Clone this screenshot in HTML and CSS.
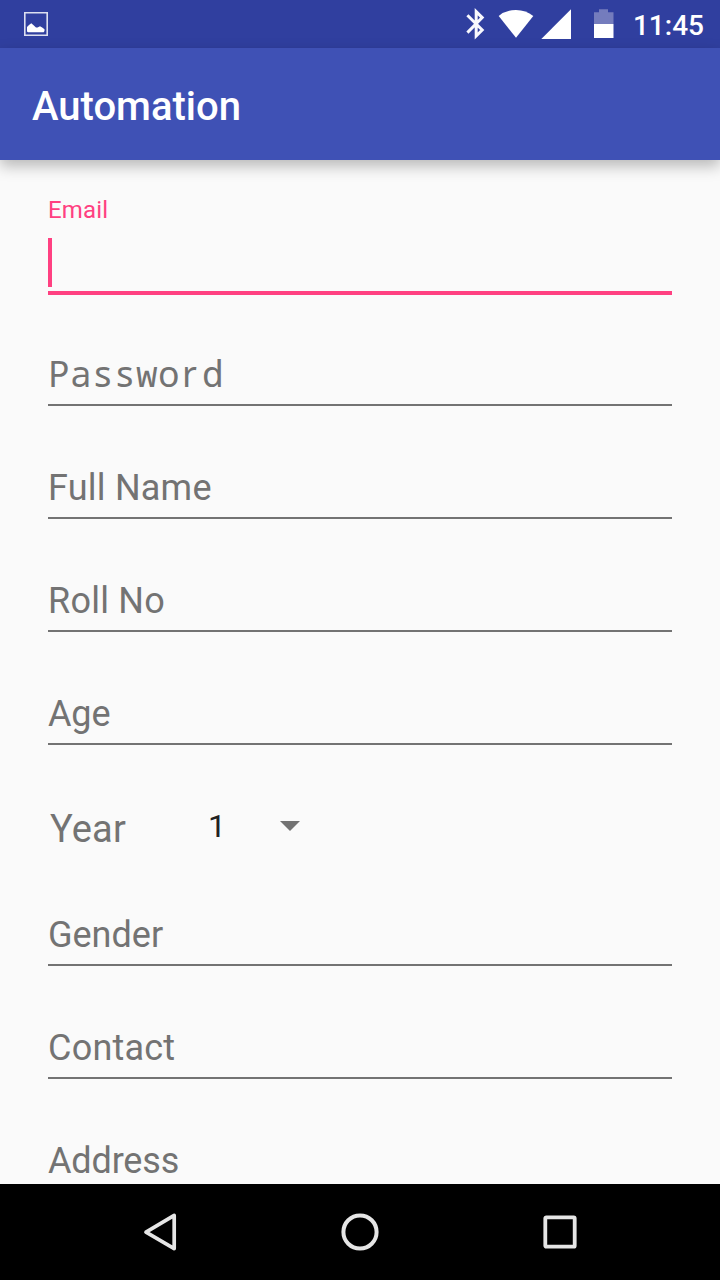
FILE: index.html
```html
<!DOCTYPE html>
<html lang="en">
<head>
<meta charset="utf-8">
<title>Automation</title>
<link rel="stylesheet" href="styles.css">
</head>
<body>
<div class="screen">
  <header class="status-bar">
    <svg class="picture-icon" width="24" height="24" viewBox="0 0 24 24">
      <path d="M.8.8h22.4v22.4H.8z" fill="none" stroke="#dcdff0" stroke-width="1.6"/>
      <path d="M3 19.5V15l2-2 2.3-1.8 2 1.9 2.7 2.3h1.5l2.5-1.2 2.2 1.2 2.3 1.8V19l-.8 1.2H4z" fill="#fff"/>
    </svg>
    <svg class="status-icons" width="150" height="48" viewBox="465 0 150 48">
      <path d="M467.4 15.2 482.2 30 476.2 36V11.6L482.2 17.6 467.4 32.6" fill="none" stroke="#f8f8fd" stroke-width="3"/>
      <path d="M498.7 16Q506 10 516 10T533.3 16L516 37.8Z" fill="#fff"/>
      <path d="M541.3 39 571 9.3V39Z" fill="#fff"/>
      <path d="M594 12.3h5V9.3h9v3h5.5V24H594Z" fill="#747cbd"/>
      <path d="M594 24h19.5v14H594Z" fill="#fff"/>
    </svg>
    <span class="clock">11:45</span>
  </header>
  <div class="app-bar"><h1 class="title">Automation</h1></div>
  <main class="form">
    <div class="email">
      <label class="email-label">Email</label>
      <div class="caret"></div>
    </div>
    <div class="field password">Passwo<span class="plain-r">r</span>d</div>
    <div class="field wide">Full Name</div>
    <div class="field wide">Roll No</div>
    <div class="field narrow">Age</div>
    <div class="year-row">
      <span class="year-label">Year</span>
      <span class="year-value">1</span>
      <svg class="arrow" width="20" height="10" viewBox="0 0 20 10"><path d="M0 0h20L10 10z" fill="#737373"/></svg>
    </div>
    <div class="field">Gender</div>
    <div class="field wide">Contact</div>
    <div class="field narrow">Address</div>
  </main>
  <nav class="nav-bar">
    <svg width="40" height="40" viewBox="140 1212 40 40"><path d="M174.2 1215.4V1248.6L146 1232.2Z" fill="none" stroke="#e6e6e6" stroke-width="3.7" stroke-linejoin="round"/></svg>
    <svg width="40" height="40" viewBox="0 0 40 40"><circle cx="20" cy="20" r="16.6" fill="none" stroke="#e6e6e6" stroke-width="4"/></svg>
    <svg width="40" height="40" viewBox="0 0 40 40"><rect x="5.3" y="5.3" width="29.4" height="29.4" rx="1" fill="none" stroke="#e6e6e6" stroke-width="3.8"/></svg>
  </nav>
</div>
</body>
</html>
```
FILE: styles.css
```css
* { box-sizing: border-box; }
body { margin: 0; font-family: Roboto, "Liberation Sans", sans-serif; }
.screen {
  width: 720px;
  height: 1280px;
  display: flex;
  flex-direction: column;
  overflow: hidden;
  background: #fafafa;
}
.status-bar {
  flex: none;
  height: 48px;
  padding: 0 16px 0 24px;
  display: flex;
  align-items: center;
  background: #303f9f;
  color: #fff;
}
.status-icons { margin-left: auto; }
.clock {
  width: 89px;
  padding-top: 3px;
  text-align: right;
  font-size: 28px;
  font-weight: 500;
  line-height: 33px;
}
.app-bar {
  flex: none;
  height: 112px;
  padding: 35px 32px 0;
  background: #3f51b5;
  box-shadow: 0 6px 14px rgba(0, 0, 0, .27);
  z-index: 1;
}
.title {
  margin: 0;
  color: #fff;
  font-size: 40px;
  font-weight: 500;
  line-height: 47px;
}
.form {
  flex: 1;
  min-height: 0;
  overflow: hidden;
  padding: 36px 48px 0;
}
.email {
  height: 99px;
  border-bottom: 4px solid #ff4081;
  margin-bottom: -2px;
}
.email-label {
  display: block;
  color: #ff4081;
  font-size: 24px;
  letter-spacing: .15px;
  line-height: 28px;
}
.caret {
  width: 4px;
  height: 49px;
  margin-top: 14px;
  background: #ff4081;
}
.field {
  height: 113px;
  padding-top: 61px;
  border-bottom: 2px solid #737373;
  color: #737373;
  font-size: 36px;
  line-height: 42px;
}
.wide { letter-spacing: .22px; }
.narrow { letter-spacing: -.15px; }
.password {
  padding-top: 60px;
  font-family: "Droid Sans Mono", "Noto Sans Mono", "DejaVu Sans Mono", monospace;
  letter-spacing: .4px;
}
.plain-r {
  display: inline-block;
  width: 22px;
  padding-left: 2px;
  font-family: "Noto Sans", sans-serif;
}
.year-row {
  display: flex;
  height: 108px;
  padding-left: 2px;
}
.year-label {
  width: 158px;
  padding-top: 62px;
  color: #737373;
  font-size: 38px;
  letter-spacing: .15px;
  line-height: 44px;
}
.year-value {
  width: 72px;
  padding-top: 62px;
  color: #212121;
  font-size: 32px;
  line-height: 38px;
}
.arrow { margin-top: 76px; }
.nav-bar {
  flex: none;
  height: 96px;
  padding: 0 140px;
  display: flex;
  align-items: center;
  justify-content: space-between;
  background: #000;
}
```
